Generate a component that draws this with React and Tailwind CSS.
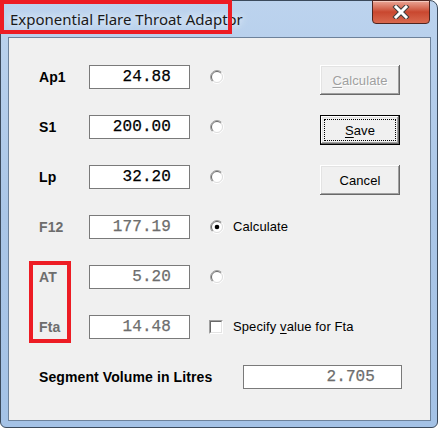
import React from "react";

function Radio({ checked }) {
  return (
    <svg width="14" height="14" viewBox="0 0 14 14" className="block">
      <circle cx="7" cy="7" r="6" fill="#fff" />
      <path d="M2.4 11.6 A6.5 6.5 0 0 1 11.6 2.4" stroke="#a0a0a0" strokeWidth="1" fill="none" />
      <path d="M3.1 10.9 A5.5 5.5 0 0 1 10.9 3.1" stroke="#696969" strokeWidth="1" fill="none" />
      <path d="M11.6 2.4 A6.5 6.5 0 0 1 2.4 11.6" stroke="#ffffff" strokeWidth="1" fill="none" />
      <path d="M10.9 3.1 A5.5 5.5 0 0 1 3.1 10.9" stroke="#dcdcdc" strokeWidth="1" fill="none" />
      {checked && <circle cx="7" cy="7" r="2.3" fill="#000" />}
    </svg>
  );
}

function Checkbox() {
  return (
    <div className="w-[14px] h-[14px] border border-t-[#a0a0a0] border-l-[#a0a0a0] border-r-white border-b-white">
      <div className="w-full h-full bg-white border border-t-[#696969] border-l-[#696969] border-r-[#e3e3e3] border-b-[#e3e3e3]" />
    </div>
  );
}

function Field({ value, gray, className }) {
  return (
    <div
      className={
        "h-[24px] bg-white border border-[#7a7a7a] flex items-center justify-end font-['Liberation_Mono',monospace] font-normal [-webkit-text-stroke:0.25px] text-[16px] leading-none " +
        (gray ? "text-[#6d6d6d] " : "text-black ") +
        className
      }
    >
      {value}
    </div>
  );
}

function Button({ children, isDefault, disabled }) {
  return (
    <div
      className={
        "relative ml-[96px] self-start w-[80px] h-[30px] bg-[#f0f0f0] flex items-center justify-center text-[13px] tracking-[0.1px] leading-none " +
        (isDefault
          ? "border border-black shadow-[inset_-1px_-1px_0_#696969,inset_1px_1px_0_#ffffff,inset_-2px_-2px_0_#a0a0a0,inset_2px_2px_0_#e3e3e3] "
          : "shadow-[inset_-1px_-1px_0_#696969,inset_1px_1px_0_#ffffff,inset_-2px_-2px_0_#a0a0a0,inset_2px_2px_0_#e3e3e3] ") +
        (disabled ? "text-[#a0a0a0] [text-shadow:1px_1px_0_#ffffff]" : "text-black")
      }
    >
      {isDefault && <div className="absolute inset-[3px] border border-dotted border-black" />}
      <span className="relative">{children}</span>
    </div>
  );
}

export default function App() {
  return (
    <div className="relative w-[439px] h-[429px] bg-white font-['Liberation_Sans',Arial,sans-serif]">
      <div className="w-[438px] h-[428px] rounded-t-[8px] rounded-b-[6px] border border-[#3b4a5c] bg-gradient-to-b from-[#bcd3ee] via-[#aac6e7] to-[#a4c2e6] flex flex-col pl-[7px] pr-[6px] pb-[6px]">
        {/* title bar */}
        <div className="h-[36px] flex items-start justify-between shrink-0">
          <div className="ml-[2px] mt-[9px] text-[15px] leading-[18px] text-[#1a1a1a] font-['Noto_Sans',sans-serif] [text-shadow:0_0_6px_#e8f1fb,0_0_10px_#e8f1fb]">
            Exponential Flare Throat Adaptor
          </div>
          <div className="mr-[1px] -mt-[1px] w-[58px] h-[24px] rounded-b-[4px] border border-[#4e2520] bg-gradient-to-b from-[#e9a596] via-[#c9472f] to-[#d9694f] shadow-[inset_0_1px_0_#f4c8bd] flex items-center justify-center">
            <svg width="18" height="14" viewBox="0 0 18 14">
              <path d="M4 2 L14 12 M14 2 L4 12" stroke="#3d3d3d" strokeWidth="5" strokeLinecap="square" />
              <path d="M4 2 L14 12 M14 2 L4 12" stroke="#ffffff" strokeWidth="3" strokeLinecap="square" />
            </svg>
          </div>
        </div>
        {/* client */}
        <div className="flex-1 bg-[#f0f0f0] border border-[#6d829b] pt-[27px] pl-[30px] flex flex-col gap-[26px] text-[13px] tracking-[0.1px]">
          <div className="flex items-center h-[24px]">
            <div className="w-[50px] text-[14px] font-bold text-black">Ap1</div>
            <Field value="24.88" className="w-[101px] pr-[18px]" />
            <div className="ml-[20px]"><Radio /></div>
            <Button disabled>
              <span className="underline underline-offset-2">C</span>alculate
            </Button>
          </div>
          <div className="flex items-center h-[24px]">
            <div className="w-[50px] text-[14px] font-bold text-black">S1</div>
            <Field value="200.00" className="w-[101px] pr-[18px]" />
            <div className="ml-[20px]"><Radio /></div>
            <Button isDefault>
              <span className="underline underline-offset-2">S</span>ave
            </Button>
          </div>
          <div className="flex items-center h-[24px]">
            <div className="w-[50px] text-[14px] font-bold text-black">Lp</div>
            <Field value="32.20" className="w-[101px] pr-[18px]" />
            <div className="ml-[20px]"><Radio /></div>
            <Button>Cancel</Button>
          </div>
          <div className="flex items-center h-[24px]">
            <div className="w-[50px] text-[14px] font-bold text-[#6d6d6d]">F12</div>
            <Field value="177.19" gray className="w-[101px] pr-[18px]" />
            <div className="ml-[20px]"><Radio checked /></div>
            <div className="ml-[9px] text-black">Calculate</div>
          </div>
          <div className="flex items-center h-[24px]">
            <div className="w-[50px] text-[14px] font-bold text-[#6d6d6d]">AT</div>
            <Field value="5.20" gray className="w-[101px] pr-[18px]" />
            <div className="ml-[20px]"><Radio /></div>
          </div>
          <div className="flex items-center h-[24px]">
            <div className="w-[50px] text-[14px] font-bold text-[#6d6d6d]">Fta</div>
            <Field value="14.48" gray className="w-[101px] pr-[18px]" />
            <div className="ml-[19px]"><Checkbox /></div>
            <div className="ml-[10px] text-black">
              Specify <span className="underline underline-offset-2">v</span>alue for Fta
            </div>
          </div>
          <div className="flex items-center h-[24px]">
            <div className="w-[204px] text-[14px] font-bold text-black">Segment Volume in Litres</div>
            <Field value="2.705" gray className="w-[159px] pr-[26px]" />
          </div>
        </div>
      </div>
      {/* annotation boxes */}
      <div className="absolute left-0 top-0 w-[232px] h-[34px] border-4 border-[#ed1c24]" />
      <div className="absolute left-[29px] top-[261px] w-[42px] h-[82px] border-4 border-[#ed1c24]" />
    </div>
  );
}
